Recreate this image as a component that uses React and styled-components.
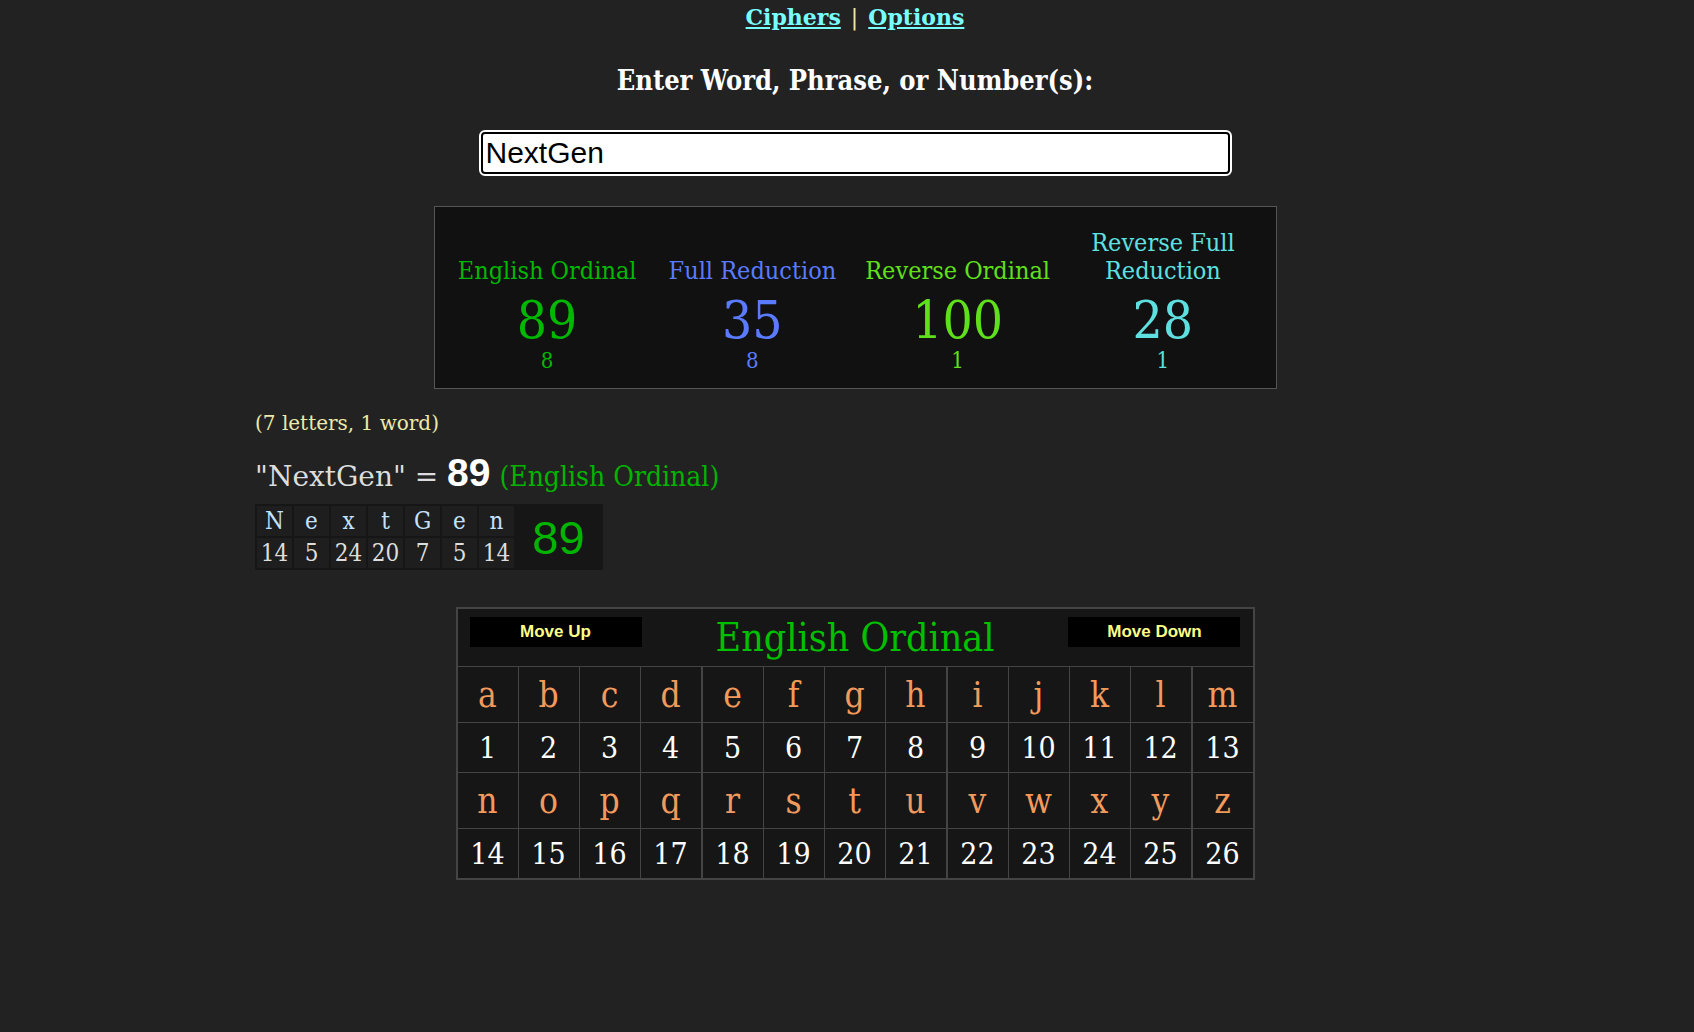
import React from 'react';
import styled, { createGlobalStyle } from 'styled-components';

const GlobalStyle = createGlobalStyle`
  html, body { margin: 0; padding: 0; background: #222; }
  body {
    color: #eee;
    font-family: "DejaVu Serif", serif;
  }
`;

const Page = styled.div`
  min-height: 1032px;
  padding-left: 16px;
  box-sizing: border-box;
  display: flex;
  flex-direction: column;
  align-items: center;
`;

const Nav = styled.div`
  font-size: 22px;
  line-height: 34px;
  font-weight: bold;
  color: #eee8aa;
  a { color: #7ff; text-decoration: underline; }
  span { margin: 0 10px; font-weight: normal; }
`;

const Prompt = styled.h2`
  margin: 30px 0 0;
  font-size: 27px;
  line-height: 32px;
  font-weight: bold;
  font-stretch: condensed;
  color: #fff;
`;

const Input = styled.input`
  margin-top: 35px;
  width: 749px;
  height: 42px;
  box-sizing: border-box;
  border: 2px solid #000;
  border-radius: 4px;
  outline: 2px solid #fff;
  background: #fff;
  padding: 0 3px;
  font-family: "Liberation Sans", Arial, sans-serif;
  font-size: 30px;
  color: #000;
`;

const Summary = styled.div`
  margin-top: 32px;
  width: 843px;
  box-sizing: border-box;
  border: 1px solid #555;
  background: #111;
  padding: 22px 10px 15px;
  display: grid;
  grid-template-columns: repeat(4, 1fr);
  font-family: "DejaVu Serif Condensed", "DejaVu Serif", serif;
  font-stretch: condensed;
  text-align: center;
`;

const SumCol = styled.div`
  display: flex;
  flex-direction: column;
  justify-content: flex-end;
  color: ${p => p.color};
`;

const SumLabel = styled.div`
  font-size: 25px;
  line-height: 28px;
`;

const SumValue = styled.div`
  font-size: 53px;
  line-height: 58px;
  margin-top: 6px;
`;

const SumSub = styled.div`
  font-size: 22px;
  line-height: 24px;
`;

const Details = styled.div`
  width: 1200px;
  margin-top: 21px;
`;

const Counts = styled.div`
  font-size: 20px;
  line-height: 26px;
  color: #eee8aa;
`;

const Equation = styled.div`
  margin-top: 20px;
  font-size: 28px;
  line-height: 34px;
  color: #ddd;
  b {
    font-family: "Liberation Sans", Arial, sans-serif;
    font-size: 39px;
    color: #fff;
  }
  em {
    font-style: normal;
    font-family: "DejaVu Serif Condensed", "DejaVu Serif", serif;
    font-stretch: condensed;
    font-size: 28px;
    color: #00b400;
  }
`;

const Breakdown = styled.table`
  margin-top: 10px;
  border-collapse: separate;
  border-spacing: 2px;
  background: #161616;
  font-family: "DejaVu Serif Condensed", "DejaVu Serif", serif;
  font-stretch: condensed;
  td {
    background: #1e1e1e;
    text-align: center;
    width: 35px;
    height: 30px;
    padding: 0;
    font-size: 24px;
  }
`;

const BdLetter = styled.td`
  color: #c4e2ff;
`;

const BdNum = styled.td`
  color: #ddd;
`;

const BdTotal = styled.td`
  && {
    width: 85px;
    background: #161616;
    color: #00b400;
    font-family: "Liberation Sans", Arial, sans-serif;
    font-stretch: normal;
    font-size: 47px;
  }
`;

const Chart = styled.table`
  margin-top: 37px;
  border-collapse: collapse;
  background: #161616;
  border: 2px solid #444;
  font-family: "DejaVu Serif Condensed", "DejaVu Serif", serif;
  font-stretch: condensed;
`;

const HeadCell = styled.td`
  height: 57px;
  padding: 0 12px;
  border-bottom: 1px solid #444;
`;

const HeadRow = styled.div`
  display: flex;
  align-items: center;
  justify-content: space-between;
`;

const MoveButton = styled.button`
  width: 172px;
  height: 30px;
  margin-top: -12px;
  border: none;
  background: #000;
  color: #ffff88;
  font-family: "Liberation Sans", Arial, sans-serif;
  font-weight: bold;
  font-size: 17px;
  font-stretch: condensed;
  cursor: pointer;
`;

const ChartTitle = styled.div`
  font-size: 39px;
  color: #00c000;
`;

const Cell = styled.td`
  width: 60px;
  padding: 0;
  text-align: center;
  border: 1px solid #444;
  border-right-width: ${p => (p.$group ? 2 : 1)}px;
  height: ${p => (p.$letter ? 55 : 49)}px;
  font-size: ${p => (p.$letter ? 35 : 30)}px;
  color: ${p => (p.$letter ? '#f29a5c' : '#fff')};
`;

const ciphers = [
  { label: 'English Ordinal', value: 89, sub: 8, color: '#00b800' },
  { label: 'Full Reduction', value: 35, sub: 8, color: '#5a7bff' },
  { label: 'Reverse Ordinal', value: 100, sub: 1, color: '#5fe01a' },
  { label: 'Reverse Full Reduction', value: 28, sub: 1, color: '#5ee0e0' },
];

const word = [['N', 14], ['e', 5], ['x', 24], ['t', 20], ['G', 7], ['e', 5], ['n', 14]];
const alpha = 'abcdefghijklmnopqrstuvwxyz'.split('');

const ChartRows = ({ from }) => {
  const letters = alpha.slice(from, from + 13);
  return (
    <>
      <tr>
        {letters.map((l, i) => (
          <Cell key={l} $letter $group={i % 4 === 3}>{l}</Cell>
        ))}
      </tr>
      <tr>
        {letters.map((l, i) => (
          <Cell key={l} $group={i % 4 === 3}>{from + i + 1}</Cell>
        ))}
      </tr>
    </>
  );
};

export default function App() {
  return (
    <>
      <GlobalStyle />
      <Page>
        <Nav>
          <a href="#ciphers">Ciphers</a>
          <span>|</span>
          <a href="#options">Options</a>
        </Nav>
        <Prompt>Enter Word, Phrase, or Number(s):</Prompt>
        <Input defaultValue="NextGen" />
        <Summary>
          {ciphers.map(c => (
            <SumCol key={c.label} color={c.color}>
              <SumLabel>{c.label === 'Reverse Full Reduction' ? <>Reverse Full<br />Reduction</> : c.label}</SumLabel>
              <SumValue>{c.value}</SumValue>
              <SumSub>{c.sub}</SumSub>
            </SumCol>
          ))}
        </Summary>
        <Details>
          <Counts>(7 letters, 1 word)</Counts>
          <Equation>
            "NextGen" = <b>89</b> <em>(English Ordinal)</em>
          </Equation>
          <Breakdown>
            <tbody>
              <tr>
                {word.map(([l], i) => <BdLetter key={i}>{l}</BdLetter>)}
                <BdTotal rowSpan={2}>89</BdTotal>
              </tr>
              <tr>
                {word.map(([, n], i) => <BdNum key={i}>{n}</BdNum>)}
              </tr>
            </tbody>
          </Breakdown>
        </Details>
        <Chart>
          <tbody>
            <tr>
              <HeadCell colSpan={13}>
                <HeadRow>
                  <MoveButton>Move Up</MoveButton>
                  <ChartTitle>English Ordinal</ChartTitle>
                  <MoveButton>Move Down</MoveButton>
                </HeadRow>
              </HeadCell>
            </tr>
            <ChartRows from={0} />
            <ChartRows from={13} />
          </tbody>
        </Chart>
      </Page>
    </>
  );
}
